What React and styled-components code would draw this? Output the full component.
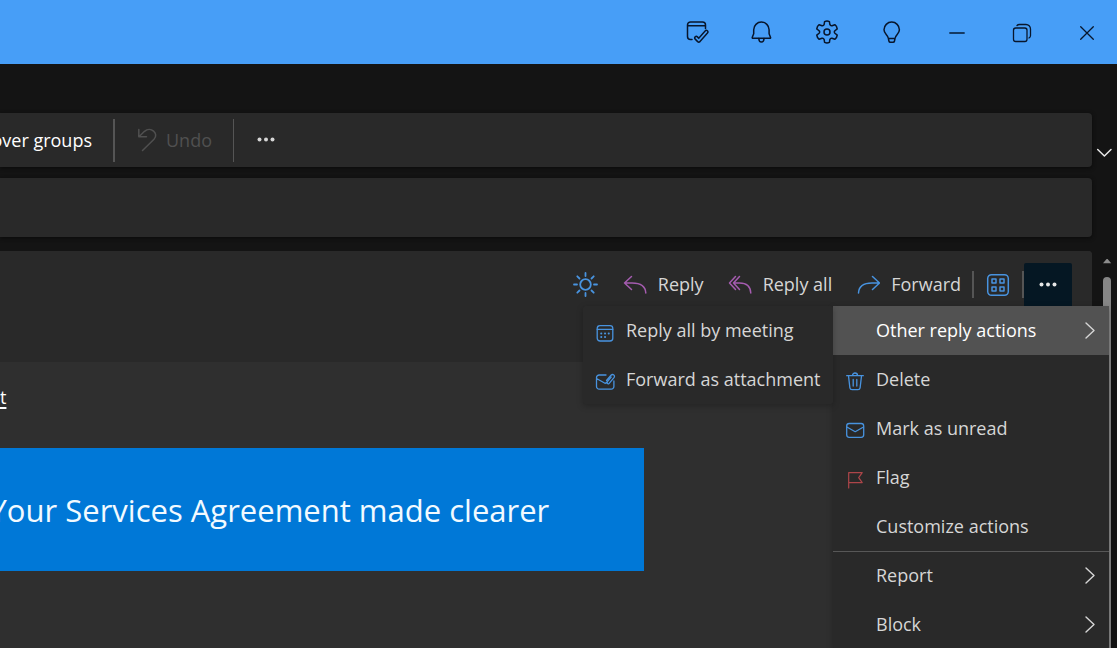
import styled, { createGlobalStyle } from "styled-components";

const GlobalStyle = createGlobalStyle`
  * {
    box-sizing: border-box;
  }

  body {
    margin: 0;
    overflow: hidden;
    background: #141414;
    font-family: "Open Sans", "Noto Sans", sans-serif;
    font-size: 18px;
    line-height: 24px;
    color: #d6d6d6;
  }

  button {
    border: 0;
    margin: 0;
    padding: 0;
    background: none;
    color: inherit;
    font: inherit;
    white-space: nowrap;
  }
`;

const Page = styled.div`
  display: flex;
  flex-direction: column;
  height: 100vh;
  overflow: hidden;
`;

const TitleBar = styled.header`
  display: flex;
  flex: none;
  align-items: center;
  justify-content: flex-end;
  gap: 41px;
  height: 64px;
  padding-right: 18px;
  background: #479ef7;
  color: #08162c;
`;

const IconButton = styled.button`
  display: flex;
  flex: none;
  align-items: center;
  justify-content: center;
  min-width: 24px;
  height: 24px;
`;

const Icon = styled.svg.attrs({ "aria-hidden": true })`
  display: block;
  flex: none;
  width: ${(props) => props.$size || 24}px;
  height: ${(props) => props.$size || 24}px;
  fill: none;
  stroke: ${(props) => props.$color || "currentColor"};
  stroke-width: ${(props) => props.$weight || 1.5};
  stroke-linecap: round;
  stroke-linejoin: round;
`;

const Content = styled.main`
  display: flex;
  flex: 1;
  flex-direction: column;
  min-height: 0;
  padding-top: 49px;
`;

const Row = styled.div`
  display: flex;
  flex: ${(props) => (props.$grow ? "1" : "none")};
  min-height: 0;
  margin-bottom: ${(props) => props.$space || 0}px;
`;

const Gutter = styled.div`
  display: flex;
  flex: none;
  flex-direction: column;
  align-items: center;
  justify-content: ${(props) => props.$align || "flex-start"};
  width: 25px;
  padding: 3px 0;
`;

const Panel = styled.section`
  display: flex;
  flex: 1;
  align-items: center;
  min-width: 0;
  height: ${(props) => props.$height}px;
  border-radius: 0 4px 4px 0;
  background: #292929;
  box-shadow: 0 1px 4px #0a0a0a;
`;

const GroupsButton = styled.button`
  display: flex;
  justify-content: flex-end;
  width: 92px;
  overflow: hidden;
  color: #ffffff;
`;

const UndoButton = styled.button`
  display: flex;
  align-items: center;
  gap: 6px;
  color: #505050;
`;

const Divider = styled.span`
  flex: none;
  width: ${(props) => props.$width || 2}px;
  height: ${(props) => props.$height}px;
  margin: 0 ${(props) => props.$right}px 0 ${(props) => props.$left}px;
  background: #555555;
`;

const Reader = styled.section`
  display: flex;
  flex: 1;
  flex-direction: column;
  min-width: 0;
  border-radius: 0 4px 0 0;
  background: #2f2f2f;
`;

const MessageHeader = styled.div`
  flex: none;
  height: 111px;
  padding: 12px 20px 0 0;
  border-radius: 0 4px 0 0;
  background: #292929;
`;

const Toolbar = styled.div`
  display: flex;
  align-items: center;
  justify-content: flex-end;
`;

const ActionButton = styled.button`
  display: flex;
  align-items: center;
  gap: 11px;
  margin-left: 24px;
  padding-bottom: 2px;
`;

const MoreWrap = styled.div`
  position: relative;
`;

const MoreButton = styled.button`
  display: flex;
  align-items: center;
  justify-content: center;
  width: 48px;
  height: 43px;
  border-radius: 2px 2px 0 0;
  background: #051723;
  color: #e6e6e6;
`;

const Menu = styled.div`
  position: absolute;
  z-index: 2;
  top: 100%;
  right: -37px;
  width: 276px;
  border-radius: 2px;
  background: #292929;
  box-shadow: 0 2px 6px rgba(0, 0, 0, 0.25);
`;

const SubMenu = styled(Menu)`
  top: 0;
  right: 100%;
  width: 250px;
`;

const MenuItem = styled.button`
  display: flex;
  align-items: center;
  gap: 10px;
  width: 100%;
  height: 49px;
  padding: 0 8px 0 11px;
  border-top: ${(props) => (props.$divided ? "1px solid #575757" : "0")};
  background: ${(props) => (props.$active ? "#525252" : "transparent")};
  color: ${(props) => (props.$active ? "#ffffff" : "inherit")};
  text-align: left;
`;

const MenuLabel = styled.span`
  flex: 1;
  padding-bottom: 2px;
`;

const MessageBody = styled.div`
  flex: 1;
  padding-top: 23px;
`;

const MessageLink = styled.a`
  display: block;
  width: 6px;
  color: #ffffff;
  text-decoration: underline;
  text-decoration-thickness: 2px;
  text-underline-offset: 3px;
`;

const Banner = styled.h1`
  display: flex;
  align-items: center;
  justify-content: flex-end;
  width: 59%;
  height: 123px;
  margin: 39px 0 0;
  padding-right: 95px;
  overflow: hidden;
  background: #0078d7;
  color: #f2faff;
  font-size: 31px;
  font-weight: 400;
  line-height: 44px;
  white-space: nowrap;
`;

const ScrollArrow = styled(Icon)`
  margin-left: 5px;
`;

const ScrollThumb = styled.div`
  flex: 1;
  width: 8px;
  margin: 11px 0 -10px 5px;
  border-radius: 4px 4px 0 0;
  background: #868686;
`;

const BLUE = "#4893df";
const PURPLE = "#a55cb0";
const RED = "#ad4549";

// six-toothed cog around 12,12
const point = (radius, degrees) => {
  const angle = (degrees * Math.PI) / 180;
  return `${(12 + radius * Math.cos(angle)).toFixed(2)} ${(
    12 +
    radius * Math.sin(angle)
  ).toFixed(2)}`;
};

const cogPath =
  [-90, -30, 30, 90, 150, 210]
    .map(
      (a, i) =>
        `${i ? "L" : "M"}${point(8, a - 21)} L${point(10.7, a - 13)} Q${point(
          11.5,
          a
        )} ${point(10.7, a + 13)} L${point(8, a + 21)} Q${point(
          6.8,
          a + 30
        )} ${point(8, a + 39)}`
    )
    .join(" ") + "Z";

const Dots = () => (
  <Icon viewBox="0 0 24 24">
    <g fill="currentColor" stroke="none">
      <circle cx="5.5" cy="11.5" r="2" />
      <circle cx="12" cy="11.5" r="2" />
      <circle cx="18.5" cy="11.5" r="2" />
    </g>
  </Icon>
);

const ChevronRight = () => (
  <Icon viewBox="0 0 22 22" $size={22} $color="#d6d6d6" $weight={1.4}>
    <path d="M7 3 15 10.500 7 18" />
  </Icon>
);

const menuIcons = {
  calendar: (
    <>
      <rect x="3.2" y="5.7" width="15.6" height="15.3" rx="2.8" />
      <path d="M3.2 9.3h15.6" />
      <path d="M7.2 13.5h.1M11 13.5h.1M14.7 13.5h.1M7.2 17h.1M11 17h.1" strokeWidth="2" />
    </>
  ),
  attachment: (
    <>
      <path d="M12 6H5.2A2.7 2.7 0 0 0 2.5 8.7v8.8a2.7 2.7 0 0 0 2.7 2.7h12a2.7 2.7 0 0 0 2.7-2.7V12M2.5 9.5l8.5 4.8 2-1" />
      <path d="m12.5 11.5 4.5-5.2c1.8-2 4.6.3 3 2.3l-4.8 5.7c-1.2 1.4-3-.1-2-1.5l4-4.7" />
    </>
  ),
  trash: (
    <>
      <path d="M2.7 6.7h16.6M8.5 6.5a2.5 2.5 0 0 1 5 0M4.500 6.900l1.400 11.900a2.200 2.200 0 0 0 2.200 1.900h5.800a2.200 2.200 0 0 0 2.200-1.900l1.400-11.900" />
      <path d="M9.2 10.5v6.5M12.8 10.5v6.5" />
    </>
  ),
  mail: (
    <>
      <rect x="2.7" y="5.5" width="17" height="13.8" rx="2.5" />
      <path d="m2.9 9 8.3 4.7L19.5 9" />
    </>
  ),
  flag: <path d="M4.7 21V5.6h13.5l-3.5 5 3.5 5H4.7" strokeWidth="1.2" />,
};

const Entry = ({ label, icon, color, arrow, ...rest }) => (
  <MenuItem type="button" role="menuitem" {...rest}>
    <Icon viewBox="0 0 22 22" $size={22} $weight={1.3} $color={color || BLUE}>
      {icon && menuIcons[icon]}
    </Icon>
    <MenuLabel>{label}</MenuLabel>
    {arrow && <ChevronRight />}
  </MenuItem>
);

const App = () => (
  <Page>
    <GlobalStyle />

    <TitleBar>
      <IconButton aria-label="My day">
        <Icon viewBox="0 0 24 24">
          <path d="M20.5 8.5V5a3 3 0 0 0-3-3h-12a3 3 0 0 0-3 3v11.5a3 3 0 0 0 3 3h1.5M2.5 5.8h18" />
          <path d="m11.3 18 2.5 2.5 7.5-8.5" strokeWidth="4.6" />
          <path d="m11.3 18 2.5 2.5 7.5-8.5" stroke="#479ef7" strokeWidth="1.7" />
        </Icon>
      </IconButton>
      <IconButton aria-label="Notifications">
        <Icon viewBox="0 0 24 24">
          <path d="M3.7 9.8a7.7 7.7 0 0 1 15.4 0v4l1.4 3.5c.2.6 0 1-.6 1H3c-.6 0-.9-.4-.7-1l1.4-3.5z" />
          <path d="M8.8 18.5c.2 4.6 5 4.6 5.2 0" />
        </Icon>
      </IconButton>
      <IconButton aria-label="Settings">
        <Icon viewBox="0 0 24 24">
          <path d={cogPath} />
          <circle cx="12" cy="12" r="3" />
        </Icon>
      </IconButton>
      <IconButton aria-label="Tips">
        <Icon viewBox="0 0 24 24">
          <path d="M8.4 18.5C8 14.6 4 14 4 9.8a7.7 7.7 0 0 1 15.4 0c0 4.2-4 4.800-4.400 8.700zM8.400 18.500l.5 2.500c.2.900.7 1.300 1.500 1.300H13c.8 0 1.300-.4 1.500-1.300l.5-2.500" />
        </Icon>
      </IconButton>
      <IconButton aria-label="Minimize">
        <Icon viewBox="0 0 24 24" $color="#153a63" $weight={1.8}>
          <path d="M5 13h14" />
        </Icon>
      </IconButton>
      <IconButton aria-label="Restore">
        <Icon viewBox="0 0 24 24" $weight={1.3}>
          <rect x="3.5" y="8" width="13.5" height="13.5" rx="2.2" />
          <path d="M7 5.5q.8-1 2.5-1H16a4.5 4.5 0 0 1 4.5 4.5v6.5q0 1.7-1.5 2.5" />
        </Icon>
      </IconButton>
      <IconButton aria-label="Close">
        <Icon viewBox="0 0 24 24" $weight={1.3}>
          <path d="m5.7 6.7 12.6 12.6M18.3 6.7 5.7 19.3" />
        </Icon>
      </IconButton>
    </TitleBar>

    <Content>
      <Row $space={11}>
        <Panel $height={54}>
          <GroupsButton type="button">over groups</GroupsButton>
          <Divider $height={43} $left={21} $right={21} />
          <UndoButton type="button" disabled>
            <Icon viewBox="0 0 24 24">
              <path d="M2.8 1.5v7.3h7.7M3.2 8.5 8.5 3.3c6-5 15 1.8 9.5 8L6.5 22.5" />
            </Icon>
            Undo
          </UndoButton>
          <Divider $height={43} $width={1} $left={21} $right={20} />
          <IconButton aria-label="More commands">
            <Dots />
          </IconButton>
        </Panel>
        <Gutter $align="flex-end">
          <IconButton aria-label="Ribbon options">
            <Icon viewBox="0 0 24 24" $color="#e8e8e8">
              <path d="m4.7 9.5 6.7 6.5L18 9.5" />
            </Icon>
          </IconButton>
        </Gutter>
      </Row>

      <Row $space={14}>
        <Panel $height={59} />
        <Gutter />
      </Row>

      <Row $grow>
        <Reader>
          <MessageHeader>
            <Toolbar>
              <IconButton aria-label="Turn on the lights">
                <Icon viewBox="0 0 26 26" $size={26} $weight={1.8} $color={BLUE}>
                  <circle cx="12.5" cy="12.5" r="5.3" />
                  <path d="M12.5 1v3M12.5 21v3M1 12.5h3M21 12.5h3M4.3 4.3l2.2 2.2M18.5 18.5l2.2 2.2M4.3 20.7l2.2-2.2M18.5 6.5l2.2-2.2" />
                </Icon>
              </IconButton>
              <ActionButton type="button">
                <Icon viewBox="0 0 24 24" $color={PURPLE}>
                  <path d="M8.500 4.500 1.500 11l7 6.500M1.500 11h7.500C17.500 11 22.500 14.500 22.800 21" />
                </Icon>
                Reply
              </ActionButton>
              <ActionButton type="button">
                <Icon viewBox="0 0 24 24" $color={PURPLE}>
                  <path d="M7.500 4.500 1.500 11l6 6.500M11.500 4.500 5.500 11l6 6.500M5.500 11h6c7 0 11 3.500 11.300 10" />
                </Icon>
                Reply all
              </ActionButton>
              <ActionButton type="button">
                <Icon viewBox="0 0 24 24" $color={BLUE}>
                  <path d="m16.5 4.5 7 6.5-7 6.5M23.5 11H16C7.5 11 2.8 14.5 2.5 21" />
                </Icon>
                Forward
              </ActionButton>
              <Divider $height={27} $left={11} $right={12} />
              <IconButton aria-label="Apps">
                <Icon viewBox="0 0 24 24" $color={BLUE}>
                  <rect x="1.7" y="1.7" width="20.6" height="20.6" rx="3.8" />
                  <path d="M6 6h4v4H6zM14 6h4v4h-4zM6 14h4v4H6zM14 14h4v4h-4z" />
                </Icon>
              </IconButton>
              <Divider $height={27} $left={12} $right={0} />
              <MoreWrap>
                <MoreButton type="button" aria-label="More actions">
                  <Dots />
                </MoreButton>
                <Menu role="menu">
                  <Entry label="Other reply actions" arrow $active />
                  <Entry label="Delete" icon="trash" />
                  <Entry label="Mark as unread" icon="mail" />
                  <Entry label="Flag" icon="flag" color={RED} />
                  <Entry label="Customize actions" />
                  <Entry label="Report" arrow $divided />
                  <Entry label="Block" arrow />
                  <SubMenu role="menu">
                    <Entry label="Reply all by meeting" icon="calendar" />
                    <Entry label="Forward as attachment" icon="attachment" />
                  </SubMenu>
                </Menu>
              </MoreWrap>
            </Toolbar>
          </MessageHeader>
          <MessageBody>
            <MessageLink href="#agreement">t</MessageLink>
            <Banner>Your Services Agreement made clearer</Banner>
          </MessageBody>
        </Reader>
        <Gutter>
          <ScrollArrow viewBox="0 0 12 12" $size={12} $color="none">
            <path d="M2 9.2h8.2L6.6 5h-1z" fill="#8c8c8c" />
          </ScrollArrow>
          <ScrollThumb />
        </Gutter>
      </Row>
    </Content>
  </Page>
);

export default App;
